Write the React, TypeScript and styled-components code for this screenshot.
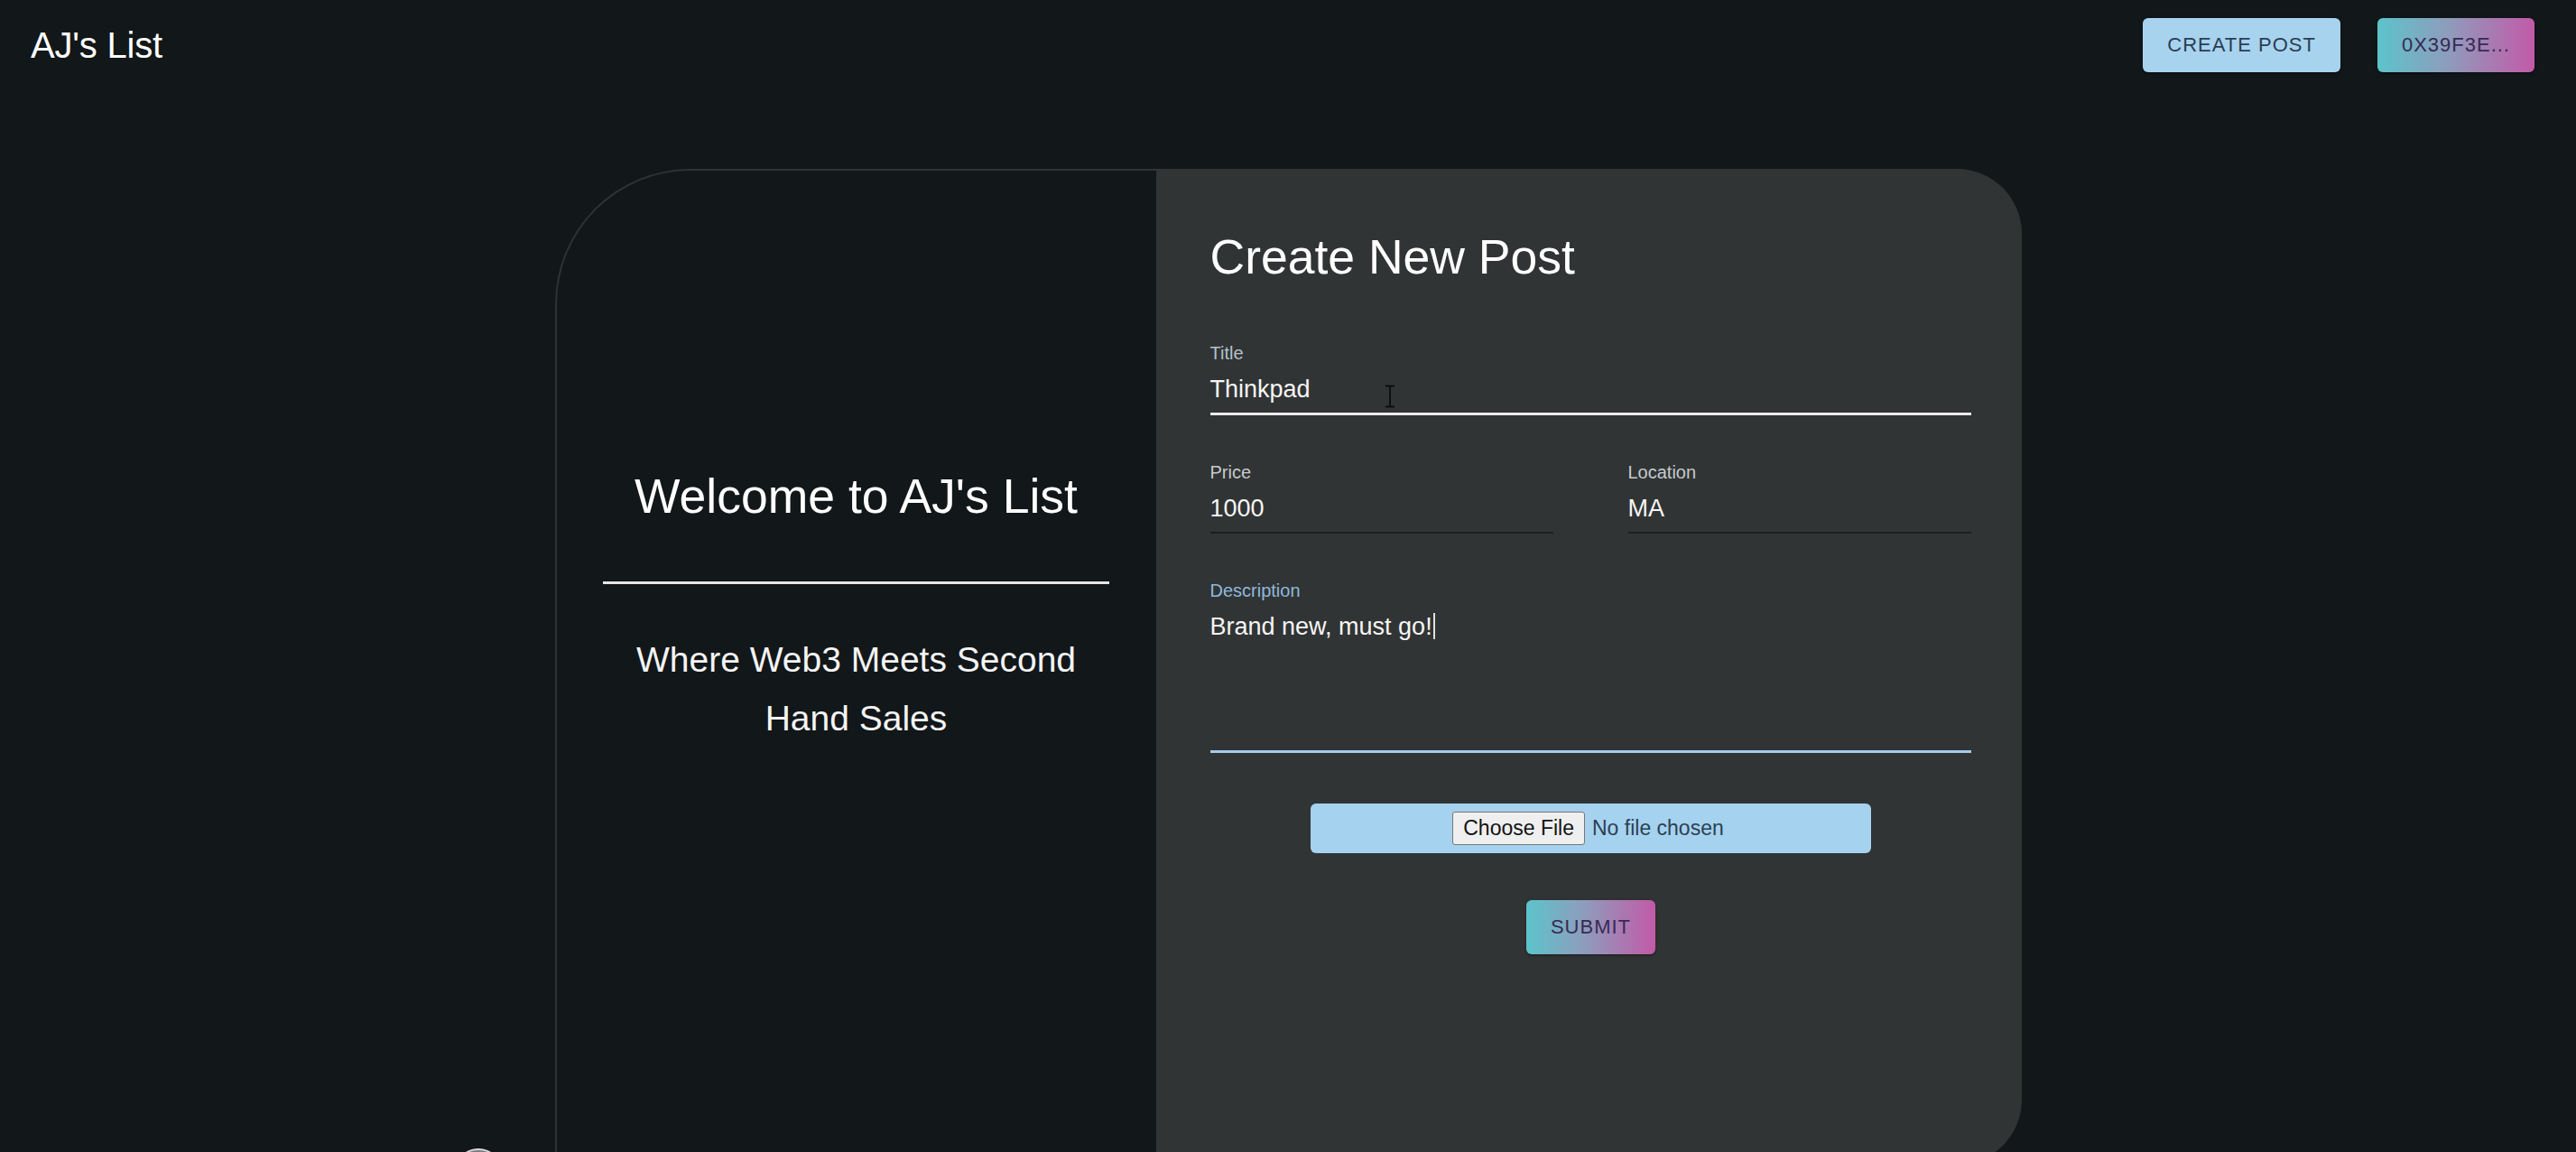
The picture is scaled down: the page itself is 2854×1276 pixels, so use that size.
import React from 'react';
import styled, { createGlobalStyle, css } from 'styled-components';

const GlobalStyle = createGlobalStyle`
  html, body {
    margin: 0;
    padding: 0;
    background: #121719;
    overflow: hidden;
  }
  body {
    font-family: "Liberation Sans", Arial, Helvetica, sans-serif;
    color: #ffffff;
  }
  * { box-sizing: border-box; }
`;

const gradient = 'linear-gradient(90deg, #5cc4cc 0%, #8e9cbc 45%, #c25aa8 100%)';

const Header = styled.header`
  height: 100px;
  display: flex;
  align-items: center;
  justify-content: space-between;
  padding: 0 46px 0 34px;
`;

const Brand = styled.div`
  font-size: 40px;
  letter-spacing: -0.2px;
  color: #ffffff;
`;

const NavActions = styled.div`
  display: flex;
  gap: 41px;
`;

const PillButton = styled.button<{ $tone: 'light' | 'gradient' }>`
  height: 60px;
  padding: 0 27px;
  border: none;
  border-radius: 6px;
  font-family: inherit;
  font-size: 22px;
  letter-spacing: 1px;
  text-transform: uppercase;
  cursor: pointer;
  box-shadow: 0 3px 1px -2px rgba(0, 0, 0, 0.2), 0 2px 2px 0 rgba(0, 0, 0, 0.14),
    0 1px 5px 0 rgba(0, 0, 0, 0.12);
  ${({ $tone }) =>
    $tone === 'light'
      ? css`
          background: #a7d3ef;
          color: #2b3d52;
        `
      : css`
          background: ${gradient};
          color: #382a55;
        `}
`;

const Main = styled.main`
  display: flex;
  justify-content: center;
  padding-top: 87px;
`;

const Card = styled.section`
  width: 1625px;
  height: 1103px;
  display: grid;
  grid-template-columns: 666px 959px;
`;

const WelcomePanel = styled.div`
  background: #121719;
  border: 2px solid #2e3335;
  border-right: none;
  border-bottom: none;
  border-top-left-radius: 150px;
  display: flex;
  flex-direction: column;
  align-items: center;
  padding: 329px 40px 0;
  text-align: center;
`;

const BigTitle = styled.h1`
  margin: 0;
  font-size: 53.5px;
  line-height: 64px;
  font-weight: 400;
  color: #ffffff;
`;

const Divider = styled.hr`
  width: 561px;
  height: 3px;
  margin: 62px 0 0;
  border: none;
  background: #e6e6e6;
`;

const Tagline = styled.p`
  margin: 51px 0 0;
  max-width: 575px;
  font-size: 39px;
  line-height: 65px;
  color: #f4f4f4;
`;

const FormPanel = styled.div`
  background: #313434;
  border-top-right-radius: 72px;
  border-bottom-right-radius: 72px;
  padding: 66px 56px 0 60px;
  display: flex;
  flex-direction: column;
`;

const FormTitle = styled(BigTitle)`
  margin-bottom: 62px;
`;

const Form = styled.form`
  display: flex;
  flex-direction: column;
  gap: 51px;
`;

const FieldRow = styled.div`
  display: grid;
  grid-template-columns: 380px 380px;
  justify-content: space-between;
`;

type LineTone = 'hover' | 'idle' | 'focus';

const lineColors: Record<LineTone, string> = {
  hover: '#ececec',
  idle: '#1b1f21',
  focus: '#a3cbea',
};

const labelColors: Record<LineTone, string> = {
  hover: '#b3c1cf',
  idle: '#c5cacf',
  focus: '#8fb8dc',
};

const Field = styled.div`
  position: relative;
  display: flex;
  flex-direction: column;
`;

const Label = styled.label<{ $tone: LineTone }>`
  font-size: 20px;
  line-height: 24px;
  color: ${({ $tone }) => labelColors[$tone]};
`;

const Value = styled.div<{ $tone: LineTone; $tall?: boolean }>`
  margin-top: 12px;
  font-size: 27px;
  line-height: 32px;
  color: #f6f6f6;
  padding-bottom: ${({ $tall }) => ($tall ? '121px' : '10px')};
  border-bottom: ${({ $tone }) => ($tone === 'idle' ? '2px' : '3px')} solid
    ${({ $tone }) => lineColors[$tone]};
`;

const Caret = styled.span`
  display: inline-block;
  width: 2px;
  height: 29px;
  margin-left: 1px;
  vertical-align: -5px;
  background: #e0e0e0;
`;

const PointerBeam = styled.svg`
  position: absolute;
  left: 193px;
  top: 47px;
`;

const FileBox = styled.div`
  margin: 56px auto 0;
  width: 621px;
  height: 55px;
  border-radius: 6px;
  background: #a5d2ef;
  display: flex;
  align-items: center;
  justify-content: center;
  gap: 8px;
  padding-right: 5px;
`;

const FileButton = styled.span`
  height: 37px;
  padding: 0 11px;
  display: flex;
  align-items: center;
  background: #efefef;
  border: 1px solid #767676;
  border-radius: 3px;
  font-size: 23px;
  color: #121212;
`;

const FileName = styled.span`
  font-size: 23px;
  color: #2d3f52;
`;

const SubmitWrap = styled.div`
  display: flex;
  justify-content: center;
  margin-top: 52px;
  padding-left: 1px;
`;

const Orb = styled.div`
  position: fixed;
  left: 503px;
  top: 1272px;
  width: 54px;
  height: 54px;
  border-radius: 50%;
  background: radial-gradient(circle at 50% 20%, #9a9a9a 0%, #3a3d3f 60%);
  border-top: 2px solid #d8d8d8;
`;

export default function App() {
  return (
    <>
      <GlobalStyle />
      <Header>
        <Brand>AJ's List</Brand>
        <NavActions>
          <PillButton $tone="light">Create Post</PillButton>
          <PillButton $tone="gradient">0x39F3E...</PillButton>
        </NavActions>
      </Header>

      <Main>
        <Card>
          <WelcomePanel>
            <BigTitle>Welcome to AJ's List</BigTitle>
            <Divider />
            <Tagline>Where Web3 Meets Second Hand Sales</Tagline>
          </WelcomePanel>

          <FormPanel>
            <FormTitle as="h2">Create New Post</FormTitle>
            <Form onSubmit={(e) => e.preventDefault()}>
              <Field>
                <Label $tone="hover">Title</Label>
                <Value $tone="hover">Thinkpad</Value>
                <PointerBeam width="12" height="26" viewBox="0 0 12 26">
                  <path
                    d="M1 1.5h3.5M7.5 1.5H11M6 2.5v21M1 24.5h3.5M7.5 24.5H11M4.5 1.5c1 0 1.5.5 1.5 1M7.5 1.5c-1 0-1.5.5-1.5 1M4.5 24.5c1 0 1.5-.5 1.5-1M7.5 24.5c-1 0-1.5-.5-1.5-1"
                    stroke="#0c0c0c"
                    strokeWidth="1.8"
                    fill="none"
                  />
                </PointerBeam>
              </Field>

              <FieldRow>
                <Field>
                  <Label $tone="idle">Price</Label>
                  <Value $tone="idle">1000</Value>
                </Field>
                <Field>
                  <Label $tone="idle">Location</Label>
                  <Value $tone="idle">MA</Value>
                </Field>
              </FieldRow>

              <Field>
                <Label $tone="focus">Description</Label>
                <Value $tone="focus" $tall>
                  Brand new, must go!
                  <Caret />
                </Value>
              </Field>
            </Form>

            <FileBox>
              <FileButton>Choose File</FileButton>
              <FileName>No file chosen</FileName>
            </FileBox>

            <SubmitWrap>
              <PillButton $tone="gradient">Submit</PillButton>
            </SubmitWrap>
          </FormPanel>
        </Card>
      </Main>
      <Orb />
    </>
  );
}
